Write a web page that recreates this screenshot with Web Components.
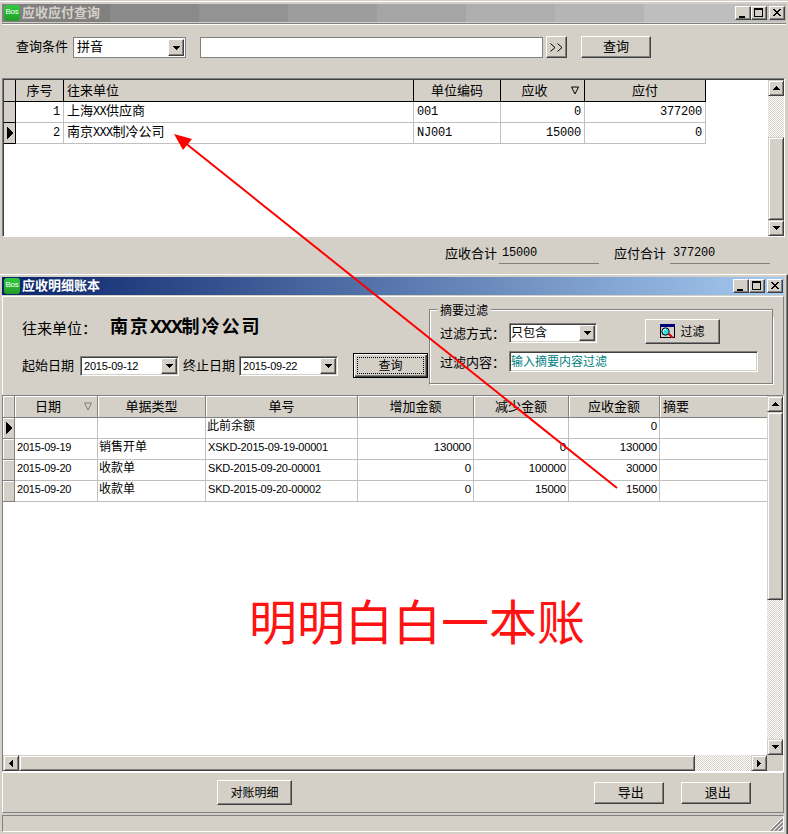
<!DOCTYPE html>
<html lang="zh-CN">
<head>
<meta charset="utf-8">
<title>应收应付查询</title>
<style>
body{margin:0;width:788px;height:834px;overflow:hidden;background:#d4d0c8;color:#000;
 font:13px/16px "Liberation Sans","Noto Sans CJK SC",sans-serif;}
</style>
</head>
<body>
<app-screen></app-screen>
<script>
const make=(css,html)=>{const t=document.createElement('template');
 t.innerHTML=`<style>*{box-sizing:border-box}:host{box-sizing:border-box}${css}</style>${html}`;return t;};
const define=(name,css,html)=>customElements.define(name,class extends HTMLElement{
 constructor(){super();this.attachShadow({mode:'open'});}
 connectedCallback(){if(this.done)return;this.done=true;
  this.shadowRoot.append(make(css,typeof html==='function'?html(this):html).content.cloneNode(true));}
});
const raised='background:#d4d0c8;border:1px solid;border-color:#fff #404040 #404040 #fff;box-shadow:inset -1px -1px #808080;';
const mono='font-family:"Liberation Mono","Noto Sans CJK SC",monospace;font-size:12px;letter-spacing:-.2px;';

/* Small arrow glyph: dir = up, down, left, right */
define('arrow-glyph',':host{display:block;line-height:0}svg{display:block}',h=>{
 const p={up:'M3 0h1v1h1v1h1v1h1v1H0V3h1V2h1V1h1z',down:'M0 0h7v1H6v1H5v1H4v1H3V3H2V2H1V1H0z',
  left:'M3 0h1v7H3V6H2V5H1V4H0V3h1V2h1V1h1z',right:'M0 0h1v1h1v1h1v1h1v1H3v1H2v1H1v1H0z'};
 const d=h.getAttribute('dir'),v=d==='up'||d==='down';
 return `<svg width="${v?7:4}" height="${v?4:7}" shape-rendering="crispEdges"><path d="${p[d]}"/></svg>`;});

define('push-button',`:host{display:flex;align-items:center;justify-content:center;${raised}height:22px;width:70px;padding-bottom:0}
 :host([default]){border:0;padding:2px;background:#d4d0c8;box-shadow:inset 0 0 0 1px #000,inset 2px 2px #fff,inset -2px -2px #404040,inset -3px -3px #808080}
 :host([default]) .f{border:1px dotted #000;width:67px;height:17px;padding-top:1px}
 .f{display:flex;align-items:center;justify-content:center;gap:4px}`,'<div class="f"><slot></slot></div>');

define('caption-button',`:host{display:flex;width:16px;height:14px;${raised}}svg{display:block}`,h=>{
 const p={min:'<path d="M3 9h6v2H3z"/>',max:'<path d="M2 1h9v9H2zM3 3v6h7V3z" fill-rule="evenodd"/>',
 close:'<path d="M3 2h2v1h1v1h2V3h1V2h2v1h-1v1H9v1H8v1h1v1h1v1h1v1H9V8H8V7H6v1H5v1H3V8h1V7h1V6h1V5H5V4H4V3H3z"/>'};
 return `<svg width="14" height="12" viewBox="0 0 14 12" shape-rendering="crispEdges">${p[h.getAttribute('kind')]}</svg>`;});

define('title-bar',`:host{display:flex;align-items:center;height:18px;color:#d4d0c8;padding:0 1px 0 2px;
  background:linear-gradient(90deg,#808080 108px,#8a8a8a 108px 197px,#939393 197px 286px,#9c9c9c 286px 375px,#a5a5a5 375px 464px,#aeaeae 464px 553px,#b5b5b5 553px 642px,#bebebe 642px)}
 :host([active]){color:#fff;background:linear-gradient(90deg,#0a246a,#a6caf0)}
 .i{width:16px;height:16px;border-radius:3px;background:linear-gradient(#30c840,#28b030 60%,#229a28);color:#fff;font:8px/14px "Liberation Sans",sans-serif;text-align:center;letter-spacing:-.3px}
 .t{flex:1;font-weight:bold;padding-left:2px;line-height:18px}
 caption-button:last-child{margin-left:2px}`,
 '<div class="i">Bos</div><div class="t"><slot></slot></div><caption-button kind="min"></caption-button><caption-button kind="max"></caption-button><caption-button kind="close"></caption-button>');

/* Edit box; "flat" has a single grey border, "drop" adds the combo arrow */
define('edit-field',`:host{display:flex;align-items:center;background:#fff;border:1px solid;border-color:#808080 #fff #fff #808080;
  box-shadow:inset 1px 1px #404040,inset -1px -1px #d4d0c8;padding:1px;height:20px;font-size:12px}
 :host([flat]){border-color:#808080;box-shadow:none;font-size:13px;height:21px}
 .t{flex:1;padding-left:0;white-space:nowrap;line-height:14px}:host([flat]) .t{padding:0 0 2px 2px}
 .b{width:16px;align-self:stretch;display:flex;align-items:center;justify-content:center;${raised}}`,
 h=>`<div class="t"><slot></slot></div>${h.hasAttribute('drop')?'<div class="b"><arrow-glyph dir="down"></arrow-glyph></div>':''}`);

/* Scroll bar: before / thumb are lengths along the track */
define('scroll-bar',`:host{display:flex;flex-direction:column;width:16px;flex:none;
  background:repeating-conic-gradient(#fff 0 25%,#d4d0c8 0 50%) 0 0/2px 2px}
 :host([horizontal]){flex-direction:row;width:auto;height:16px}
 .b{width:16px;height:16px;flex:none;display:flex;align-items:center;justify-content:center}
 .b,.th{background:#d4d0c8;border:1px solid;border-color:#d4d0c8 #404040 #404040 #d4d0c8;box-shadow:inset 1px 1px #fff,inset -1px -1px #808080}
 .sp{flex:1}`,h=>{
 const z=h.hasAttribute('horizontal'),d=z?['left','right']:['up','down'],a=z?'width':'height';
 return `<div class="b"><arrow-glyph dir="${d[0]}"></arrow-glyph></div><div style="${a}:${h.getAttribute('before')||0}px"></div>
 <div class="th" style="${a}:${h.getAttribute('thumb')}px"></div><div class="sp"></div><div class="b"><arrow-glyph dir="${d[1]}"></arrow-glyph></div>`;});

const grids={
 summary:{cols:'12px 48px 350px 87px 84px 121px',align:'crllrr',
  head:['','序号','往来单位','单位编码','应收','应付'],sort:4,current:1,
  rows:[['','1','上海<i>XX</i>供应商','001','0','377200'],['','2','南京<i>XXX</i>制冷公司','NJ001','15000','0']]},
 ledger:{cols:'12px 83px 108px 152px 116px 95px 91px 107px',align:'clllrrrl',
  head:['','日期','单据类型','单号','增加金额','减少金额','应收金额','摘要'],sort:1,current:0,
  rows:[['','','','此前余额','','','0',''],['','2015-09-19','销售开单','XSKD-2015-09-19-00001','130000','0','130000',''],
  ['','2015-09-20','收款单','SKD-2015-09-20-00001','0','100000','30000',''],['','2015-09-20','收款单','SKD-2015-09-20-00002','0','15000','15000','']]}
};
define('data-grid',`:host{display:block;flex:1;background:#fff;overflow:hidden}
 .g{display:grid;grid-template-rows:22px;grid-auto-rows:21px;width:max-content}
 .g>div{display:flex;align-items:center;white-space:nowrap;border-right:1px solid #c0c0c0;border-bottom:1px solid #c0c0c0;padding:0 3px}
 .g>.r{justify-content:flex-end}.g>.c{justify-content:center}
 .g>.h{background:#d4d0c8;position:relative;border-color:#000}
 .g>.ind{background:#d4d0c8;border-color:#000;padding:0}
 .h svg{position:absolute;right:5px;top:6px}
 i{font-style:normal;${mono}letter-spacing:-.7px}
 :host([kind=summary]) .d{padding-bottom:2px}
 :host([kind=summary]) .n{${mono}padding-bottom:1px}
 :host([kind=ledger]) .g>div{padding:0 2px 5px}
 :host([kind=ledger]) .g>.n{font-size:11px;letter-spacing:-.2px;padding-bottom:4px}
 :host([kind=ledger]) .g>.n.r{font-size:11.5px}
 :host([kind=ledger]) .g>.z{font-size:12px;padding:0 2px 4px 1px}
 :host([kind=ledger]) .g>.h{padding:0 3px 0;border-color:#808080;box-shadow:inset 1px 1px #fff}
 :host([kind=ledger]) .g>.ind{padding:0;border-color:#808080;box-shadow:inset 1px 1px #fff}
 :host([kind=ledger]) .g>div:nth-child(8n){border-right:0}`,h=>{
 const k=h.getAttribute('kind'),g=grids[k],al={c:'c',l:'',r:'r'};
 const head=g.head.map((t,i)=>`<div class="h ${t==='往来单位'||t==='摘要'?'':'c'}" ${i===g.sort?'style="padding-right:19px"':''}>${t}${i===g.sort?`<svg width="8" height="9" fill="none" stroke="${k==='summary'?'#000':'#808080'}"><path d="M.5 1h7L4 8z"/></svg>`:''}</div>`).join('');
 const rows=g.rows.map((r,j)=>r.map((t,i)=>i===0?`<div class="ind c">${j===g.current?'<svg width="6" height="12" shape-rendering="crispEdges"><path d="M0 0L6 6 0 12z"/></svg>':''}</div>`
  :`<div class="d ${al[g.align[i]]} ${/^[\w-]+$/.test(t)?'n':'z'}">${t?`<span>${t}</span>`:''}</div>`).join('')).join('');
 return `<div class="g" style="grid-template-columns:${g.cols}">${head}${rows}</div>`;});

define('group-frame',`:host{display:grid;grid-template-rows:15px 1fr;width:345px;height:76px}
 .top{display:flex;align-items:center;font-size:12px;line-height:15px}
 .l,.r{height:8px;align-self:flex-end;border-top:1px solid #808080;box-shadow:inset 0 1px #fff}
 .l{width:8px;border-left:1px solid #808080;box-shadow:inset 1px 1px #fff}.r{flex:1;border-right:1px solid #808080;margin-right:1px}
 .top span{padding:3px 3px 0}
 .body{border:1px solid;border-color:transparent #fff #fff #808080;border-top:0;box-shadow:inset -1px -1px #808080,inset 1px 0 #fff}`,
 '<div class="top"><div class="l"></div><span><slot name="title"></slot></span><div class="r"></div></div><div class="body"><slot></slot></div>');

define('query-window',`:host{display:flex;flex-direction:column;height:274px;padding:1px 0 0}
 .w{border-top:1px solid #fff;padding:2px 2px 0}
 title-bar{width:784px}
 .ln{height:2px;margin:1px 0 0 2px;background:linear-gradient(#808080 50%,#fff 50%);width:784px}
 .bar{display:flex;align-items:flex-start;height:53px;padding:11px 0 0 16px}
 .bar>span{width:57px;line-height:16px;padding-top:3px}
 .bar edit-field{margin-top:1px}.q{margin-left:14px}
 .grid{display:flex;width:783px;height:159px;margin-left:2px;border:1px solid;border-color:#808080 #fff #fff #808080;box-shadow:inset 1px 1px #404040;padding:1px 0 0 1px;background:#fff}
 .sum{display:flex;padding:8px 0 0 445px;height:37px;line-height:17px}
 .v{${mono}width:100px;height:19px;border-bottom:1px solid #808080;padding-left:3px;margin:0 15px 0 2px;line-height:16px}
 .sum>span{width:52px}.s2+.v{margin-left:4px}`,
 `<div class="w"><title-bar>应收应付查询</title-bar></div><div class="ln"></div>
 <div class="bar"><span>查询条件</span><edit-field flat drop style="width:113px">拼音</edit-field>
 <edit-field flat style="width:343px;margin-left:14px"></edit-field>
 <push-button style="width:21px;margin-left:3px"><svg width="13" height="9" fill="none" stroke="#000" style="display:block"><path d="M.5.5l4.5 4-4.5 4M7.5.5l4.5 4-4.5 4"/></svg></push-button>
 <push-button class="q">查询</push-button></div>
 <div class="grid"><data-grid kind="summary"></data-grid><scroll-bar before="41" thumb="83"></scroll-bar></div>
 <div class="sum"><span>应收合计</span><div class="v">15000</div><span class="s2">应付合计</span><div class="v">377200</div></div>`);

define('ledger-window',`:host{display:block;width:788px;height:560px;border-top:1px solid #fff;border-right:1px solid #404040;box-shadow:inset -1px 0 #808080;padding:2px 0 0 2px}
 title-bar{width:782px}
 .form{display:flex;width:782px;height:99px;margin-top:1px;border:1px solid;border-color:#fff #808080 #d4d0c8 #fff;padding:0 0 0 19px}
 .left{width:407px;flex:none}
 .who{display:flex;align-items:center;height:42px;margin-top:10px;font-size:15px}
 .who span{width:88px;padding-top:1px;white-space:nowrap}
 .who b{font-family:"Liberation Mono","Noto Sans CJK SC",monospace;font-size:18px;letter-spacing:2px;white-space:nowrap}
 .who b i{font-style:normal;font-size:20px;letter-spacing:-1.5px}
 .dates{display:flex;align-items:center;height:26px;margin-top:4px}
 .dates>span{width:58px}.dates>.e{width:56px;margin-left:4px}
 .dt{font-size:11px;letter-spacing:-.2px;padding-left:2px}
 group-frame{height:76px;margin-top:5px;flex:none}
 .r{display:flex;height:25px;align-items:center;padding-left:10px;margin-top:3px}.r>span{width:69px;white-space:nowrap;padding-top:2px}
 .r2{margin-top:4px}
 .s{font-size:12px}
 .grid{display:grid;grid-template-columns:764px 16px;grid-template-rows:359px 16px;width:782px;height:377px;border:1px solid #808080;border-right-color:#fff;border-bottom-color:#fff;background:#d4d0c8}
 .foot{display:flex;align-items:center;width:782px;height:41px;border:1px solid;border-color:#fff #808080 #808080 #fff;padding-left:214px}
 .stat{display:flex;justify-content:flex-end;align-items:flex-end;width:782px;height:17px;margin-top:2px;border:1px solid;border-color:#808080 #fff #fff #808080}
 .stat svg{display:block}`,
 `<title-bar active>应收明细账本</title-bar>
 <div class="form"><div class="left"><div class="who"><span>往来单位：</span><b>南京<i>XXX</i>制冷公司</b></div>
 <div class="dates"><span>起始日期</span><edit-field drop style="width:99px"><span class="dt">2015-09-12</span></edit-field><span class="e">终止日期</span><edit-field drop style="width:99px"><span class="dt">2015-09-22</span></edit-field><push-button default class="s" style="width:75px;height:25px;margin:-2px 0 0 15px">查询</push-button></div></div>
 <group-frame style="height:83px"><span slot="title">摘要过滤</span>
 <div class="r"><span>过滤方式：</span><edit-field drop style="width:88px">只包含</edit-field><push-button class="s" style="width:75px;height:25px;margin:-2px 0 0 48px">
 <svg width="16" height="15" shape-rendering="crispEdges" style="display:block"><path d="M0 0h15v14H0z" fill="#000"/><path d="M1 3h13v10H1z" fill="#d4d0c8"/><path d="M0 0h15v3H0z" fill="#000080"/><circle cx="5.5" cy="7.5" r="3.7" fill="#30e0e8" stroke="#000" shape-rendering="auto"/><path d="M4 5h2v1H4zM3 6h1v2H3z" fill="#fff"/><path d="M8 9h2v1h1v1h1v1h1v2h-2v-1h-1v-1H9v-1H8z" fill="#d01010"/></svg>过滤</push-button></div>
 <div class="r r2"><span>过滤内容：</span><edit-field style="width:249px;height:21px;color:#008080">输入摘要内容过滤</edit-field></div>
 </group-frame></div>
 <div class="grid"><data-grid kind="ledger"></data-grid><scroll-bar thumb="188"></scroll-bar><scroll-bar horizontal thumb="676"></scroll-bar></div>
 <div class="foot"><push-button class="s" style="width:75px;height:25px">对账明细</push-button><push-button style="margin-left:302px">&nbsp;导出</push-button><push-button style="margin-left:17px">&nbsp;退出</push-button></div>
 <div class="stat"><svg width="13" height="13"><path d="M1 13L13 1M5 13l8-8M9 13l4-4" stroke="#808080" stroke-width="1.7"/><path d="M0 12L12 0M4 12l8-8M8 12l4-4" stroke="#fff"/></svg></div>`);

/* Red slogan and arrow drawn over both windows */
define('note-layer',`:host{position:absolute;inset:0;pointer-events:none}svg{position:absolute;left:0;top:0}
 .t{position:absolute;left:249px;top:589px;font:48px/60px "Noto Sans CJK SC",sans-serif;color:#ff1212;white-space:nowrap}`,
 `<svg width="788" height="834"><path d="M617 488L184 142" stroke="#f00" stroke-width="2"/><path d="M174 134L192 139 183 150z" fill="#f00"/></svg><div class="t">明明白白一本账</div>`);

define('app-screen',':host{display:block;position:relative;width:788px;height:834px;overflow:hidden}',
 '<query-window></query-window><ledger-window></ledger-window><note-layer></note-layer>');
</script>
</body>
</html>
